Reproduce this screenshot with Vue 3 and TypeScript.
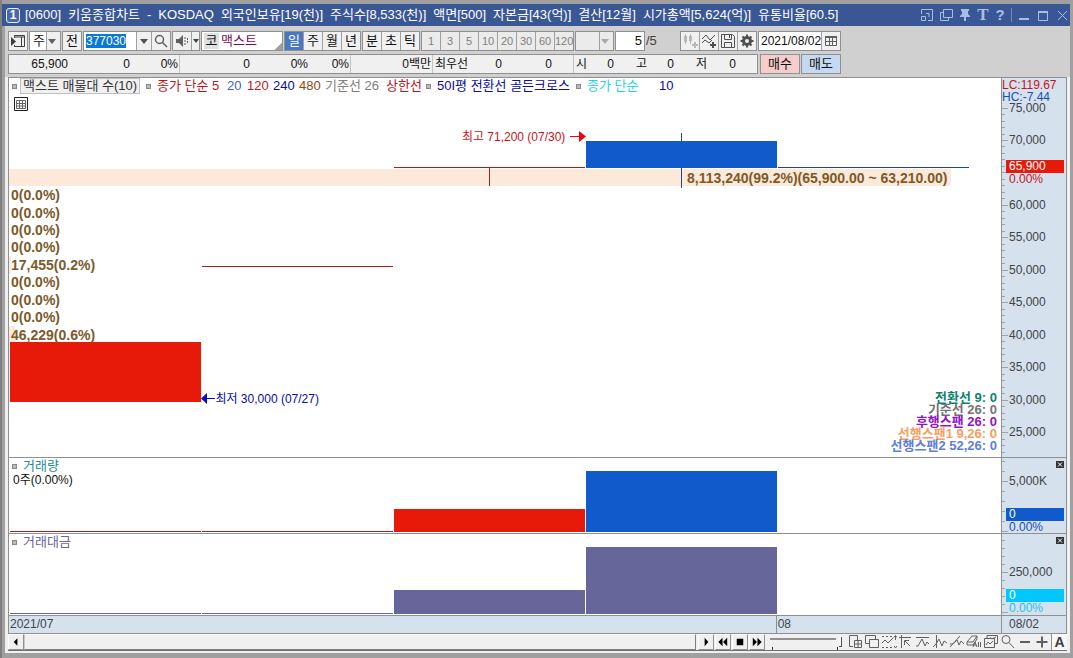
<script setup lang="ts">
import { onMounted, ref } from 'vue'

const codeInput = ref<HTMLInputElement | null>(null)
onMounted(() => codeInput.value?.select())

const titleParts = [
  '[0600]', '키움종합차트', '-', 'KOSDAQ', '외국인보유[19(천)]', '주식수[8,533(천)]', '액면[500]',
  '자본금[43(억)]', '결산[12월]', '시가총액[5,624(억)]', '유통비율[60.5]',
]

const periods = ['일', '주', '월', '년']
const subPeriods = ['분', '초', '틱']
const minutes = ['1', '3', '5', '10', '20', '30', '60', '120']

interface Cell { text: string; w: number; sep?: boolean; left?: boolean }
const quote: Cell[] = [
  { text: '65,900', w: 60 }, { text: '0', w: 62 }, { text: '0%', w: 49, sep: true },
  { text: '0', w: 71 }, { text: '0%', w: 58 }, { text: '0%', w: 42, sep: true },
  { text: '0백만', w: 82, sep: true }, { text: '최우선', w: 38, left: true },
  { text: '0', w: 32 }, { text: '0', w: 50 }, { text: '', w: 21, sep: true },
  { text: '시', w: 14 }, { text: '0', w: 27 }, { text: '고', w: 33 }, { text: '0', w: 27 },
  { text: '저', w: 33 }, { text: '0', w: 29 },
]

interface Legend { text: string; w: number; color: string; mark?: boolean; boxed?: boolean }
const legend: Legend[] = [
  { text: '맥스트 매물대 수(10)', w: 134, color: '#333', mark: true, boxed: true },
  { text: '종가 단순 5', w: 81, color: '#b8141c', mark: true },
  { text: '20', w: 20, color: '#3c62c4' },
  { text: '120', w: 26, color: '#c4141c' },
  { text: '240', w: 26, color: '#0c0ca0' },
  { text: '480', w: 26, color: '#8a4a14' },
  { text: '기준선 26', w: 61, color: '#808080' },
  { text: '상한선', w: 40, color: '#b8141c' },
  { text: '50I평 전환선 골든크로스', w: 150, color: '#0c0ca0', mark: true },
  { text: '종가 단순', w: 83, color: '#28d4e0', mark: true },
  { text: '10', w: 20, color: '#0c0ca0' },
]

interface Bin { text: string; share: number; full?: boolean }
const empty: Bin = { text: '0(0.0%)', share: 0 }
const bins: Bin[] = [
  { text: '8,113,240(99.2%)(65,900.00 ~ 63,210.00)', share: 95, full: true },
  empty, empty, empty, empty,
  { text: '17,455(0.2%)', share: 0.2 },
  empty, empty, empty,
  { text: '46,229(0.6%)', share: 0.6 },
]

const spans = [
  { text: '전환선 9: 0', color: '#0a8470' },
  { text: '기준선 26: 0', color: '#747474' },
  { text: '후행스팬 26: 0', color: '#9412c8' },
  { text: '선행스팬1 9,26: 0', color: '#f4a060' },
  { text: '선행스팬2 52,26: 0', color: '#5c80dc' },
]

const PRICE_H = 379
const priceY = (v: number) => 62 + ((70000 - v) / 5000) * 32.45
const priceLabels = [75000, 70000, 60000, 55000, 50000, 45000, 40000, 35000, 30000, 25000]
const priceTicks = Array.from({ length: 54 }, (_, i) => 75000 - i * 1000)
const pct = (y: number, h: number) => `${((y / h) * 100).toFixed(3)}%`
const volTicks = [3, 13, 23, 33, 43, 53, 63, 73]
const amountTicks = [6, 14, 22, 30, 38, 46, 54, 62, 70, 78]

interface Tool { name: string; d: string; bold?: boolean }
const tools: Tool[] = [
  { name: '새 차트', d: 'M6 12.5H2.5V1.5H10.5V6M7.5 6.5H14.5V13.5H7.5ZM11 6.5V13.5M7.5 10H14.5' },
  { name: '차트 겹침', d: 'M5 9.5H1.5V1.5H11.5V5M5.5 5.5H14.5V13.5H5.5Z' },
  { name: '구간 이동', d: 'M1 2.5H3M5 2.5H7M9 2.5H11M1 13.5H3M5 13.5H7M9 13.5H11M1 9L4 6L7 9L12 4M14.5 2V6M12.5 3.5L14.5 1.5L16 3.5M13 12L14.5 14L16 12' },
  { name: '십자선', d: 'M1 3.5H13M3.5 1V14M12 12L7 7M6.5 11V6.5H11' },
  { name: '수평선', d: 'M1 3.5H14M1 12H3L7 5L10 12L12 8L14 10' },
  { name: '수직선', d: 'M4.5 1V14M1 13L4 10L7 5L10 12L12 7L15 9' },
  { name: '추세선', d: 'M1 13L11 2M1 10H4L8 6L10 11L12 7L15 10' },
  { name: '모두 지우기', d: 'M1 8L6 2H11L7 8ZM1 8V11H7L11 5V2M7 13L9 8L11 13M8 11H10M12.5 8V13M14.5 8V13' },
  { name: '차트 저장', d: 'M4 4V1.5H14.5V9.5H12M1.5 4.5H11.5V13.5H1.5ZM3 11L5 8L7 10L10 7M7 3.5L9 5L13 3' },
  { name: '돋보기', d: 'M6 1.5A4 4 0 1 1 6 9.5A4 4 0 1 1 6 1.5M9 8.5L14 14' },
  { name: '축소', d: 'M3 8H13', bold: true },
  { name: '확대', d: 'M2.5 8H13.5M8 2.5V13.5', bold: true },
]

const playback = [
  { name: '재생', d: 'M6 3L10 7.5L6 12Z' },
  { name: '뒤로', d: 'M7 3V12L2.5 7.5ZM12 3V12L7.5 7.5Z' },
  { name: '정지', d: 'M4 4H11V11H4Z' },
  { name: '앞으로', d: 'M3 3V12L7.5 7.5ZM8 3V12L12.5 7.5Z' },
]
</script>

<template>
  <main class="window">
    <header class="titlebar">
      <span class="badge">1</span>
      <h1><span v-for="t in titleParts" :key="t">{{ t }}</span></h1>
      <div class="winctl">
        <button aria-label="도킹"><svg viewBox="0 0 14 14"><path d="M1.5 6V1.5H12.5V12.5H8M1.5 8.5H5.5V12.5H1.5ZM6 5.5H9V9" /></svg></button>
        <button aria-label="복제"><svg viewBox="0 0 14 14"><path d="M4.5 1.5H13.5V9.5H4.5ZM4.5 4.5H1.5V12.5H9.5V9.5" /></svg></button>
        <button aria-label="고정"><svg viewBox="0 0 14 14"><path class="solid" d="M3 1H11V3H10V6L12 8V9H8V13H6V9H2V8L4 6V3H3Z" /></svg></button>
        <button class="glyph serif" aria-label="글꼴">T</button>
        <button class="glyph" aria-label="도움말">?</button>
        <i class="divider"></i>
        <button aria-label="최소화"><svg viewBox="0 0 14 14"><path class="thick" d="M2 11H12" /></svg></button>
        <button aria-label="최대화"><svg viewBox="0 0 14 14"><path d="M2.5 3.5H11.5V12.5H2.5Z" /><path class="thick" d="M2 4H12" /></svg></button>
        <button aria-label="닫기"><svg viewBox="0 0 14 14"><path d="M3 3L12 12M12 3L3 12" /></svg></button>
      </div>
    </header>

    <div class="body">
      <section class="toolbar" aria-label="도구 모음">
        <button class="btn icon" aria-label="패널 열기"><svg viewBox="0 0 18 18"><path d="M5.5 6V3.5H15.5V14.5H5.5V13M5 5H16M12.5 5V14" /><path class="solid" d="M2 5L7 9.5L2 14Z" /></svg></button>
        <label class="drop kind"><select aria-label="종목 구분"><option>주</option></select><svg viewBox="0 0 8 5"><path d="M0 0H8L4 5Z" /></svg></label>
        <button class="btn">전</button>
        <div class="group code">
          <input ref="codeInput" value="377030" aria-label="종목코드" spellcheck="false">
          <button class="arrow" aria-label="종목 목록"><svg viewBox="0 0 8 5"><path class="solid" d="M0 0H8L4 5Z" /></svg></button>
          <button class="find" aria-label="종목 검색"><svg viewBox="0 0 16 16"><path class="lens" d="M6.5 2.5A4 4 0 1 1 6.5 10.5A4 4 0 1 1 6.5 2.5M9.5 9.5L14 14" /></svg></button>
        </div>
        <div class="group sound">
          <button class="find" aria-label="음성"><svg viewBox="0 0 16 16"><path class="solid" d="M2 6H5L9 2V14L5 10H2Z" /><path stroke-dasharray="2 1" d="M11 4V12M13.5 5V11" /></svg></button>
          <button class="small" aria-label="음성 설정"><svg viewBox="0 0 8 5"><path class="solid" d="M1 0H7L4 4Z" /></svg></button>
        </div>
        <div class="group name"><span>코</span><input value="맥스트" aria-label="종목명"></div>
        <div class="group"><button v-for="(p, i) in periods" :key="p" class="cell" :class="{ on: i === 0 }">{{ p }}</button></div>
        <div class="group"><button v-for="p in subPeriods" :key="p" class="cell">{{ p }}</button></div>
        <div class="group dim"><button v-for="m in minutes" :key="m" class="cell">{{ m }}</button></div>
        <label class="drop blank"><select aria-label="사용자 주기"><option></option></select><svg viewBox="0 0 8 5"><path d="M0 0H8L4 5Z" /></svg></label>
        <label class="count"><input value="5" aria-label="조회 개수"><span>/5</span></label>
        <div class="group">
          <button class="cell pale" aria-label="차트 유형"><svg viewBox="0 0 18 18"><path d="M4.5 2V12M9.5 2V12" /><path class="thick" d="M11 13H17M14 10V16" /><path class="solid" d="M3 4H6V10H3ZM8 4H11V9H8Z" /></svg></button>
          <button class="cell" aria-label="지표 추가"><svg viewBox="0 0 18 18"><path d="M2 7L6 3L10 8L15 3M2 11L5 8L9 11L12 8" /><path class="thick" d="M10 13H16M13 10V16" /></svg></button>
          <button class="cell" aria-label="저장"><svg viewBox="0 0 18 18"><path d="M2.5 2.5H13.5L15.5 4.5V15.5H2.5ZM5.5 2.5V7.5H12.5V2.5M5.5 15.5V10.5H12.5V15.5M10.5 3V6" /></svg></button>
          <button class="cell" aria-label="설정"><svg viewBox="0 0 18 18"><circle cx="9" cy="9" r="3.5" class="ring" /><path class="thick" d="M9 2.5V5M9 13V15.5M2.5 9H5M13 9H15.5M4.5 4.5L6 6M12 12L13.5 13.5M4.5 13.5L6 12M12 6L13.5 4.5" /></svg></button>
        </div>
        <div class="group date">
          <input value="2021/08/02" aria-label="기준일">
          <button class="find" aria-label="달력"><svg viewBox="0 0 16 16"><path d="M2.5 3.5H13.5V12.5H2.5ZM6.5 5V12M9.5 5V12M3 8.5H13" /><path class="thick" d="M2 4H14" /></svg></button>
        </div>
      </section>

      <section class="quotebar" aria-label="시세">
        <div class="quote">
          <span v-for="(c, i) in quote" :key="i" :class="{ sep: c.sep, start: c.left }" :style="{ flexBasis: c.w + 'px' }">{{ c.text }}</span>
        </div>
        <button class="order buy">매수</button>
        <button class="order sell">매도</button>
      </section>

      <section class="chart" aria-label="차트">
        <div class="pane price">
          <div class="plot">
            <div class="bins">
              <div v-for="(b, i) in bins" :key="i" class="bin">
                <i :style="{ width: b.share + '%' }"></i><span :class="{ full: b.full }">{{ b.text }}</span>
              </div>
            </div>
            <svg class="shapes" viewBox="0 0 992 379" preserveAspectRatio="none" aria-hidden="true">
              <rect x="1" y="264" width="191" height="60" class="up" />
              <rect x="193" y="188" width="191" height="1" class="upline" />
              <rect x="385" y="89" width="191" height="1" class="upline" />
              <rect x="480" y="89" width="1" height="19" class="upline" />
              <rect x="577" y="63" width="191" height="27" class="down" />
              <rect x="672" y="55" width="1" height="8" class="downline" />
              <rect x="672" y="90" width="1" height="20" class="downline" />
              <rect x="769" y="89" width="191" height="1" class="downline" />
            </svg>
            <div class="legend">
              <span v-for="(l, i) in legend" :key="i" class="item" :style="{ flexBasis: l.w + 'px', color: l.color }">
                <i v-if="l.mark" class="mark"></i><span :class="{ boxed: l.boxed }">{{ l.text }}</span>
              </span>
            </div>
            <button class="gridbtn" aria-label="데이터 표"><svg viewBox="0 0 14 14"><path class="frame" d="M.5.5H13.5V13.5H.5Z" /><path d="M2.5 3.5H11.5V11.5H2.5ZM5.5 3V12M8.5 3V12M2 6.5H12M2 9H12" /></svg></button>
            <div class="callout high">최고 71,200 (07/30)<svg viewBox="0 0 16 11"><path d="M0 5H10V6H0ZM9 0L16 5.5L9 11Z" /></svg></div>
            <div class="callout low"><svg viewBox="0 0 14 11"><path d="M14 5H5V6H14ZM6 0L0 5.5L6 11Z" /></svg>최저 30,000 (07/27)</div>
            <ul class="spans"><li v-for="s in spans" :key="s.text" :style="{ color: s.color }">{{ s.text }}</li></ul>
          </div>
          <div class="axis">
            <i v-for="t in priceTicks" :key="t" class="tick" :class="{ major: t % 5000 === 0 }" :style="{ top: pct(priceY(t), PRICE_H) }"></i>
            <span v-for="v in priceLabels" :key="v" class="val" :style="{ top: pct(priceY(v), PRICE_H) }">{{ v.toLocaleString('en-US') }}</span>
            <div class="limits"><span class="lc">LC:119.67</span><span class="hc">HC:-7.44</span></div>
            <div class="now red"><b>65,900</b><span>0.00%</span></div>
          </div>
        </div>

        <div class="pane volume">
          <div class="plot">
            <svg class="shapes" viewBox="0 0 992 75" preserveAspectRatio="none" aria-hidden="true">
              <rect x="1" y="73" width="191" height="1" class="upline" />
              <rect x="193" y="73" width="191" height="1" class="upline" />
              <rect x="385" y="51" width="191" height="23" class="up" />
              <rect x="577" y="13" width="191" height="61" class="down" />
            </svg>
            <div class="sub teal"><i class="mark"></i>거래량</div>
            <div class="subval">0주(0.00%)</div>
          </div>
          <div class="axis">
            <i v-for="t in volTicks" :key="t" class="tick" :class="{ major: t === 23 || t === 73 }" :style="{ top: pct(t, 75) }"></i>
            <span class="val" :style="{ top: pct(23, 75) }">5,000K</span>
            <button class="close" aria-label="거래량 닫기"><svg viewBox="0 0 8 7"><path d="M2 1.5L6 5.5M6 1.5L2 5.5" /></svg></button>
            <div class="now blue"><b>0</b><span>0.00%</span></div>
          </div>
        </div>

        <div class="pane amount">
          <div class="plot">
            <svg class="shapes" viewBox="0 0 992 81" preserveAspectRatio="none" aria-hidden="true">
              <rect x="1" y="79" width="191" height="1" class="violet" />
              <rect x="193" y="79" width="191" height="1" class="violet" />
              <rect x="385" y="56" width="191" height="24" class="violet" />
              <rect x="577" y="13" width="191" height="67" class="violet" />
            </svg>
            <div class="sub slate"><i class="mark"></i>거래대금</div>
          </div>
          <div class="axis">
            <i v-for="t in amountTicks" :key="t" class="tick" :class="{ major: t === 38 || t === 78 }" :style="{ top: pct(t, 81) }"></i>
            <span class="val" :style="{ top: pct(38, 81) }">250,000</span>
            <button class="close" aria-label="거래대금 닫기"><svg viewBox="0 0 8 7"><path d="M2 1.5L6 5.5M6 1.5L2 5.5" /></svg></button>
            <div class="now cyan"><b>0</b><span>0.00%</span></div>
          </div>
        </div>

        <div class="dates"><span class="m1">2021/07</span><span class="m2">08</span><span class="today">08/02</span></div>
      </section>

      <footer class="bottom">
        <button class="raised" aria-label="왼쪽으로"><svg viewBox="0 0 15 15"><path d="M9 3.5V11.5L5 7.5Z" /></svg></button>
        <div class="track"></div>
        <div class="play"><button v-for="p in playback" :key="p.name" class="raised" :aria-label="p.name"><svg viewBox="0 0 15 15"><path :d="p.d" /></svg></button></div>
        <input class="slider" type="range" min="0" max="100" value="100" aria-label="확대 비율">
        <div class="tools">
          <button v-for="t in tools" :key="t.name" :aria-label="t.name"><svg viewBox="0 0 16 16"><path :d="t.d" :class="{ bold: t.bold }" /></svg></button>
          <button class="auto">A</button>
        </div>
      </footer>
    </div>
  </main>
</template>

<style>
body { margin: 0; background: #a0a0a0; }
</style>

<style scoped>
* { box-sizing: border-box; }
.window {
  height: 100vh; min-height: 480px; display: flex; flex-direction: column;
  padding: 4px 3px 5px 0; background: #a0a0a0; border-left: 2px solid #808080; overflow: hidden;
  font: 12px/14px "Liberation Sans Narrow", "Liberation Sans", "Noto Sans CJK KR", sans-serif; color: #111;
  white-space: nowrap;
}
button, input, select { font: inherit; color: inherit; margin: 0; padding: 0; border: 0; border-radius: 0; outline: 0; background: none; min-width: 0; }
svg { display: block; fill: none; stroke: currentColor; stroke-width: 1; }
.solid { fill: currentColor; stroke: none; }
.thick { stroke-width: 2; }

.titlebar { flex: 0 0 22px; display: flex; align-items: center; background: #3a5795; color: #fff; padding: 0 0 0 4px; }
.badge { width: 14px; height: 15px; border: 1px solid #e8eefa; border-radius: 3px; background: #4a69a8; text-align: center; font-weight: 700; line-height: 13px; }
h1 { display: flex; gap: 7px; margin: 0 0 0 5px; font-size: 13px; font-weight: 400; line-height: 20px; flex: 1 1 0; overflow: hidden; }
.winctl { display: flex; align-items: center; gap: 5px; color: #a9bde6; padding-right: 1px; }
.winctl button { width: 14px; height: 18px; display: grid; place-items: center; }
.winctl svg { width: 14px; height: 14px; }
.winctl .glyph { width: 12px; font: 700 15px/18px "Liberation Sans", sans-serif; }
.winctl .serif { font: 700 17px/18px "Liberation Serif", serif; }
.divider { width: 1px; height: 14px; background: #7188ba; }

.body { flex: 1; min-height: 0; display: flex; flex-direction: column; margin-left: 3px; background: #f0f0f0; border: solid #f0f0f0; border-width: 0 3px 2px; }
.toolbar, .quotebar { display: flex; background: #d0d0d0; margin: 0 -3px; gap: 1px; }
.toolbar { padding: 5px 3px 3px; height: 28px; }
.quotebar { padding: 0 3px 3px; height: 23px; }
.btn, .drop, .group { height: 20px; border: 1px solid #909090; background: #f0f0f0; }
.btn { width: 20px; font-size: 13px; }
.icon { color: #404040; }
.icon svg { width: 18px; height: 18px; }
.group { display: flex; }
.group button { border-left: 1px solid #a0a0a0; display: grid; place-items: center; }
.group button:first-child { border-left: 0; }
.drop { display: flex; position: relative; }
.drop select { appearance: none; width: 100%; padding-left: 3px; font-size: 13px; }
.drop svg { position: absolute; right: 4px; top: 7px; width: 8px; height: 5px; pointer-events: none; fill: #606060; stroke: none; }
.kind { width: 32px; background: linear-gradient(90deg, #fff 16px, #a0a0a0 16px 17px, #f0f0f0 17px); }
.blank { width: 39px; background: linear-gradient(90deg, #ebebeb 23px, #a0a0a0 23px 24px, #ebebeb 24px); }
.blank svg { fill: #a8a8a8; }
.code { width: 88px; }
.code input { flex: 1; background: #fff; padding-left: 2px; font-size: 12px; }
.code input::selection { background: #0a78d7; color: #fff; }
.arrow { width: 15px; color: #505050; }
.arrow svg, .small svg { width: 8px; height: 5px; }
.find { width: 19px; color: #606060; }
.find svg { width: 16px; height: 16px; }
.lens { stroke-width: 1.5; }
.sound { width: 28px; }
.small { width: 9px; color: #404040; }
.name { width: 82px; background: linear-gradient(135deg, #fff 64px, #a0a0a0 64px); }
.name span { width: 15px; margin: 1px 0 1px 2px; background: #e0e0e0; text-align: center; font-size: 13px; line-height: 16px; }
.name input { width: 56px; padding-left: 2px; color: #780a5a; font-size: 13px; }
.cell { width: 19px; font-size: 13px; }
.group .cell:first-child { width: 18px; }
.cell svg { width: 18px; height: 18px; color: #505050; }
.cell.on { background: #4a78c0; color: #fff; }
.dim { color: #808080; background: #ebebeb; }
.dim .cell { font-size: 11px; }
.cell.pale svg { color: #b8b8b8; }
.ring { stroke-width: 3; }
.count { display: flex; flex: 0 0 64px; font-size: 13px; line-height: 20px; color: #404040; }
.count input { width: 30px; height: 20px; border: 1px solid #909090; background: #fff; text-align: right; padding-right: 2px; color: #111; }
.count span { padding-left: 1px; }
.date { width: 83px; }
.date input { flex: 1; background: #fff; padding-left: 2px; }

.quote { flex: 0 0 750px; height: 20px; display: flex; border: 1px solid #909090; background: #f0f0f0; line-height: 18px; }
.quote span { flex: 0 1 auto; text-align: right; padding-right: 1px; }
.quote .sep { border-right: 1px solid #c4c4c4; }
.quote .start { text-align: left; padding-left: 2px; }
.order { width: 40px; height: 20px; border: 1px solid #909090; font-size: 13px; }
.buy { background: #f6cdca; margin-left: 1px; }
.sell { background: #c4daf2; }

.chart { flex: 1; min-height: 0; display: flex; flex-direction: column; border: 1px solid #909090; background: #fff; }
.pane { display: flex; min-height: 0; border-bottom: 1px solid #909090; }
.price { flex: 379 1 0; }
.volume { flex: 75 1 0; }
.amount { flex: 81 1 0; }
.plot { flex: 1; position: relative; min-width: 0; overflow: hidden; }
.axis { flex: 0 0 65px; position: relative; border-left: 1px solid #909090; background: #d6e1ee; color: #404448; overflow: hidden; }
.shapes { position: absolute; inset: 0; width: 100%; height: 100%; stroke: none; shape-rendering: crispEdges; }
.up { fill: #e71a0a; }
.upline { fill: #b01c1c; }
.down { fill: #105acc; }
.downline { fill: #1c489a; }
.violet { fill: #66669a; }
.bins { position: absolute; left: 0; right: 0; top: 24%; height: 46%; display: flex; flex-direction: column; font-weight: 700; font-size: 14px; color: #7c5a2a; }
.bin { flex: 1; position: relative; display: flex; align-items: center; }
.bin i { position: absolute; left: 0; top: 0; height: 100%; background: #fde9d9; }
.bin span { position: relative; padding-left: 2px; }
.bin .full { width: 95%; text-align: right; padding-right: 4px; }
.legend { position: relative; display: flex; padding-left: 3px; height: 16px; align-items: center; font-size: 13px; }
.item { display: flex; align-items: center; flex-shrink: 0; }
.mark { width: 5px; height: 5px; flex: none; border: 1px solid #888; background: #b8bcb8; margin-right: 6px; }
.boxed { border: 1px solid #c0c0c0; background: #f0f0f0; padding: 0 2px; margin-left: -3px; }
.gridbtn { position: relative; display: block; margin: 3px 0 0 5px; width: 14px; height: 14px; color: #666; }
.frame { stroke: #222; }
.callout { position: absolute; display: flex; align-items: center; gap: 5px; transform: translateY(-50%); }
.callout svg { height: 11px; stroke: none; }
.high { top: 15.5%; right: 41.8%; color: #c8141c; }
.high svg { width: 16px; fill: #f00010; }
.low { top: 84.6%; left: 19.4%; color: #0c0ca0; gap: 0; }
.low svg { width: 14px; fill: #0808d0; }
.spans { position: absolute; right: 4px; bottom: 5px; margin: 0; padding: 0; list-style: none; text-align: right; font-weight: 700; font-size: 13px; line-height: 12px; }
.tick { position: absolute; left: 0; width: 3px; height: 1px; background: #a0a4a8; }
.tick.major { width: 6px; }
.val { position: absolute; left: 7px; transform: translateY(-50%); }
.limits { position: absolute; left: 0; right: 0; top: 0; background: #d6e1ee; line-height: 12px; height: 25px; padding-top: 1px; }
.limits span { display: block; }
.lc { color: #c4141c; }
.hc { color: #1450b4; }
.now { position: absolute; left: 4px; right: 2px; line-height: 12px; }
.now b { display: block; font-weight: 400; color: #fff; height: 13px; line-height: 13px; }
.now b, .now span { padding-left: 3px; }
.red { top: 21.6%; color: #c4141c; }
.red b { background: #e71a0a; }
.blue { bottom: 0; color: #1450b4; }
.blue b { background: #105acc; }
.cyan { bottom: 1px; color: #18c4f0; }
.cyan b { background: #00c8ff; }
.close { position: absolute; right: 2px; top: 3px; width: 8px; height: 7px; background: #303438; color: #fff; }
.close svg { width: 8px; height: 7px; }
.sub { position: relative; display: flex; align-items: center; padding-left: 3px; height: 16px; font-size: 13px; }
.teal { color: #1c8c90; }
.slate { color: #66669a; }
.subval { position: relative; padding-left: 4px; line-height: 12px; }
.dates { flex: 0 0 17px; display: flex; background: #d6e1ee; color: #404448; line-height: 16px; }
.m1 { flex: 768 1 0; padding-left: 1px; }
.m2 { flex: 224 1 0; border-left: 1px solid #909090; padding-left: 1px; }
.today { flex: 0 0 65px; border-left: 1px solid #909090; padding-left: 7px; }

.bottom { flex: 0 0 17px; display: flex; border-bottom: 1px solid #707070; background: #f0f0f0; }
.raised { width: 16px; height: 16px; border: 1px solid; border-color: #fff #909090 #909090 #fff; background: #f0f0f0; }
.raised svg { width: 14px; height: 14px; fill: #000; stroke: none; }
.track { flex: 1; border: 1px solid; border-color: #fff #808080 #808080 #c8c8c8; }
.play { display: flex; gap: 1px; margin-left: 2px; }
.slider { appearance: none; width: 72px; height: 16px; margin: 0 5px; background: linear-gradient(#909090, #909090) 0 4px / 66px 2px no-repeat, linear-gradient(#333, #333) 2px 13px / 1px 3px no-repeat, linear-gradient(#333, #333) 67px 13px / 1px 3px no-repeat; }
.slider::-webkit-slider-thumb { appearance: none; width: 3px; height: 10px; background: #f8f8f8; border-right: 1px solid #505050; border-bottom: 1px solid #505050; }
.tools { display: flex; gap: 1px; color: #606060; }
.tools button { width: 16px; height: 16px; }
.tools svg { width: 16px; height: 16px; }
.bold { stroke-width: 2; }
.tools .auto { border-left: 1px solid #909090; background: #f8f8f8; font: 700 14px/16px "Liberation Sans", sans-serif; color: #404040; }
</style>
